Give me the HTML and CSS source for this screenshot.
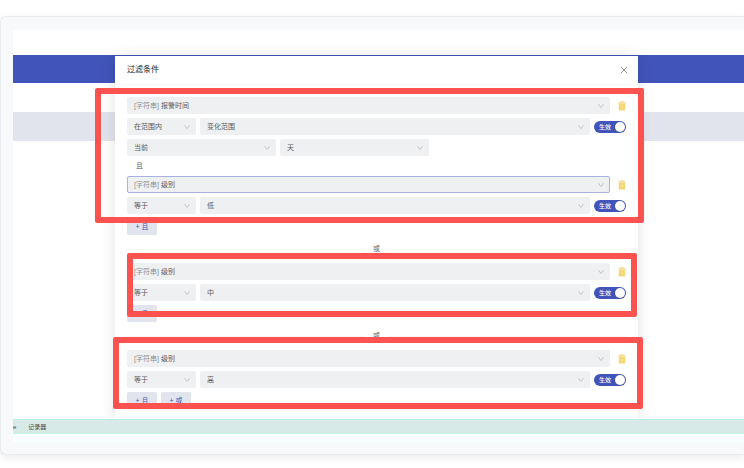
FILE: index.html
```html
<!DOCTYPE html>
<html lang="zh-CN">
<head>
  <meta charset="utf-8" />
  <meta name="viewport" content="width=device-width, initial-scale=1" />
  <title>过滤条件</title>
  <link rel="stylesheet" href="styles.css">
</head>
<body>
  <!-- 公用图标 -->
  <svg class="sprite" aria-hidden="true">
    <symbol id="arrow" viewBox="0 0 6 6">
      <path d="M0.5 1.2 L3 4.6 L5.5 1.2" fill="none" stroke="currentColor" stroke-width="0.8" />
    </symbol>
    <symbol id="trash" viewBox="0 0 8 10">
      <path d="M0.3 1.2 H2.4 V0.3 H5.6 V1.2 H7.7 V2.6 H0.3 Z" fill="#f0dc93" />
      <path d="M0.8 2.6 H7.2 V9.4 H0.8 Z" fill="#f4d570" />
      <path d="M3.2 4.4 V7.4 M4.8 4.4 V7.4" stroke="#faeab0" stroke-width="0.7" />
    </symbol>
  </svg>

  <main class="card">
    <div class="stage">
      <!-- 背景页面 -->
      <div class="page">
        <div class="topbar"></div>
        <div class="navbar"></div>
        <div class="toolbar"></div>
        <div class="table-head"></div>
      </div>

      <!-- 过滤条件弹窗 -->
      <section class="dialog" role="dialog" aria-labelledby="dialogTitle">
        <header class="dialog-header">
          <h1 id="dialogTitle">过滤条件</h1>
          <button class="close" type="button" aria-label="关闭">
            <svg viewBox="0 0 8 8"><path d="M1 1 L7 7 M7 1 L1 7" stroke="currentColor" stroke-width="0.9" /></svg>
          </button>
        </header>

        <form class="filters">
          <div class="row row-wide">
            <div class="field">
              <label for="f1">[字符串]</label>
              <select id="f1"><option>报警时间</option></select>
              <svg class="arrow"><use href="#arrow" /></svg>
            </div>
            <button class="delete" type="button" aria-label="删除"><svg><use href="#trash" /></svg></button>
          </div>
          <div class="row">
            <div class="field field-op">
              <select aria-label="条件"><option>在范围内</option></select>
              <svg class="arrow"><use href="#arrow" /></svg>
            </div>
            <div class="field">
              <select aria-label="值"><option>变化范围</option></select>
              <svg class="arrow"><use href="#arrow" /></svg>
            </div>
            <label class="switch">生效<input type="checkbox" role="switch" checked></label>
          </div>
          <div class="row">
            <div class="field field-range">
              <select aria-label="范围"><option>当前</option></select>
              <svg class="arrow"><use href="#arrow" /></svg>
            </div>
            <div class="field field-range">
              <select aria-label="单位"><option>天</option></select>
              <svg class="arrow"><use href="#arrow" /></svg>
            </div>
          </div>
          <p class="and">且</p>
          <div class="row row-wide">
            <div class="field active">
              <label for="f2">[字符串]</label>
              <select id="f2"><option>级别</option></select>
              <svg class="arrow"><use href="#arrow" /></svg>
            </div>
            <button class="delete" type="button" aria-label="删除"><svg><use href="#trash" /></svg></button>
          </div>
          <div class="row">
            <div class="field field-op">
              <select aria-label="条件"><option>等于</option></select>
              <svg class="arrow"><use href="#arrow" /></svg>
            </div>
            <div class="field">
              <select aria-label="值"><option>低</option></select>
              <svg class="arrow"><use href="#arrow" /></svg>
            </div>
            <label class="switch">生效<input type="checkbox" role="switch" checked></label>
          </div>
          <div class="row">
            <button class="add" type="button">+ 且</button>
          </div>

          <div class="or"><span>或</span></div>

          <div class="row row-wide">
            <div class="field">
              <label for="f3">[字符串]</label>
              <select id="f3"><option>级别</option></select>
              <svg class="arrow"><use href="#arrow" /></svg>
            </div>
            <button class="delete" type="button" aria-label="删除"><svg><use href="#trash" /></svg></button>
          </div>
          <div class="row">
            <div class="field field-op">
              <select aria-label="条件"><option>等于</option></select>
              <svg class="arrow"><use href="#arrow" /></svg>
            </div>
            <div class="field">
              <select aria-label="值"><option>中</option></select>
              <svg class="arrow"><use href="#arrow" /></svg>
            </div>
            <label class="switch">生效<input type="checkbox" role="switch" checked></label>
          </div>
          <div class="row">
            <button class="add" type="button">+ 且</button>
          </div>

          <div class="or"><span>或</span></div>

          <div class="row row-wide">
            <div class="field">
              <label for="f4">[字符串]</label>
              <select id="f4"><option>级别</option></select>
              <svg class="arrow"><use href="#arrow" /></svg>
            </div>
            <button class="delete" type="button" aria-label="删除"><svg><use href="#trash" /></svg></button>
          </div>
          <div class="row">
            <div class="field field-op">
              <select aria-label="条件"><option>等于</option></select>
              <svg class="arrow"><use href="#arrow" /></svg>
            </div>
            <div class="field">
              <select aria-label="值"><option>高</option></select>
              <svg class="arrow"><use href="#arrow" /></svg>
            </div>
            <label class="switch">生效<input type="checkbox" role="switch" checked></label>
          </div>
          <div class="row">
            <button class="add" type="button">+ 且</button>
            <button class="add" type="button">+ 或</button>
          </div>
        </form>

        <!-- 红色标注框 -->
        <div class="mark mark-first"></div>
        <div class="mark mark-second"></div>
        <div class="mark mark-third"></div>
      </section>
    </div>

    <footer class="statusbar">
      <span>e</span>
      <span>记录器</span>
    </footer>
    <div class="tail"></div>
  </main>
</body>
</html>
```

FILE: styles.css
```css
* {
  box-sizing: border-box;
}
body {
  margin: 0;
  padding: 16px 0 13px;
  background: #fff;
  color: #5c5c5c;
  font: 7px/12px "Liberation Sans", "Noto Sans CJK SC", sans-serif;
}
button,
select,
input {
  margin: 0;
  padding: 0;
  border: 0;
  background: none;
  color: inherit;
  font: inherit;
  appearance: none;
}
.sprite {
  display: none;
}
.card {
  padding: 12px 0 12px 12px;
  border: 1px solid #e9ebee;
  border-right: 0;
  border-radius: 6px 0 0 6px;
  background: #f8f9fb;
  box-shadow: 0 3px 8px rgba(0, 0, 0, 0.08);
}

/* 背景页面 */
.stage {
  display: grid;
  overflow: hidden;
  background: #fff;
}
.page,
.dialog {
  grid-area: 1 / 1;
}
.topbar {
  height: 26px;
  border-top: 2px solid #fcfcfc;
}
.navbar {
  height: 28px;
  background: #4154b9;
}
.toolbar {
  height: 29px;
}
.table-head {
  height: 29px;
  background: #e1e4ec;
}
.statusbar {
  display: flex;
  align-items: center;
  gap: 12px;
  height: 15px;
  border-top: 1px solid #b8efe4;
  border-bottom: 1px solid #c4f3ea;
  background: #d8eae7;
  color: #444;
  font-size: 6px;
}
.tail {
  height: 8px;
  background: #f8fffd;
}

/* 弹窗 */
.dialog {
  position: relative;
  margin: 27px 106px 0 102px;
  padding-bottom: 10px;
  background: #fff;
  box-shadow: 0 1px 14px rgba(0, 0, 0, 0.12);
}
.dialog-header {
  display: flex;
  align-items: center;
  justify-content: space-between;
  height: 29px;
  padding: 0 10px 0 12px;
  border-bottom: 1px solid #f6f6f6;
}
.dialog-header h1 {
  margin: 0;
  color: #222;
  font-size: 8px;
  font-weight: 400;
}
.close {
  display: flex;
  color: #888;
}
.close svg {
  width: 8px;
  height: 8px;
}
.filters {
  display: flex;
  flex-direction: column;
  gap: 4px;
  padding: 12px 12px 0;
}
.row {
  display: flex;
  align-items: center;
  gap: 4px;
  height: 17px;
}
.row-wide {
  gap: 8px;
}
.field {
  display: flex;
  flex: 1;
  align-items: center;
  gap: 2px;
  height: 17px;
  padding: 0 5px 0 6px;
  border: 1px solid #eff0f2;
  border-radius: 2px;
  background: #eff0f2;
}
.field label {
  color: #909090;
}
.field select {
  flex: 1;
  min-width: 0;
}
.field-op {
  flex: 0 0 69px;
}
.field-range {
  flex: 0 0 149px;
}
.active {
  border-color: #a9b2df;
}
.arrow {
  width: 6px;
  height: 6px;
  color: #b8babd;
}
.delete {
  display: flex;
}
.delete svg {
  width: 8px;
  height: 10px;
}
.switch {
  display: flex;
  align-items: center;
  justify-content: space-between;
  width: 32px;
  height: 12px;
  padding: 0 1px 0 5px;
  border-radius: 6px;
  background: #b5b8c2;
  color: #fff;
  font-size: 6px;
  font-weight: 500;
}
.switch:has(:checked) {
  background: #4154b9;
}
.switch input {
  width: 10px;
  height: 10px;
  border-radius: 50%;
  background: #fff;
}
.and {
  margin: 0;
  padding-left: 9px;
}
.add {
  width: 30px;
  height: 17px;
  border-radius: 2px;
  background: #e1e4ec;
  color: #4154b9;
}
.or {
  display: flex;
  align-items: center;
  gap: 7px;
  height: 20px;
}
.or::before,
.or::after {
  content: "";
  flex: 1;
  border-top: 1px solid #f6f6f6;
}

/* 标注框 */
.mark {
  position: absolute;
  border: 6px solid #fc5250;
  border-radius: 2px;
  pointer-events: none;
}
.mark-first {
  top: 32px;
  right: -6px;
  left: -20px;
  height: 135px;
}
.mark-second {
  top: 197px;
  right: 1px;
  left: 12px;
  height: 64px;
}
.mark-third {
  top: 281px;
  right: -5px;
  left: -2px;
  height: 72px;
}
```
